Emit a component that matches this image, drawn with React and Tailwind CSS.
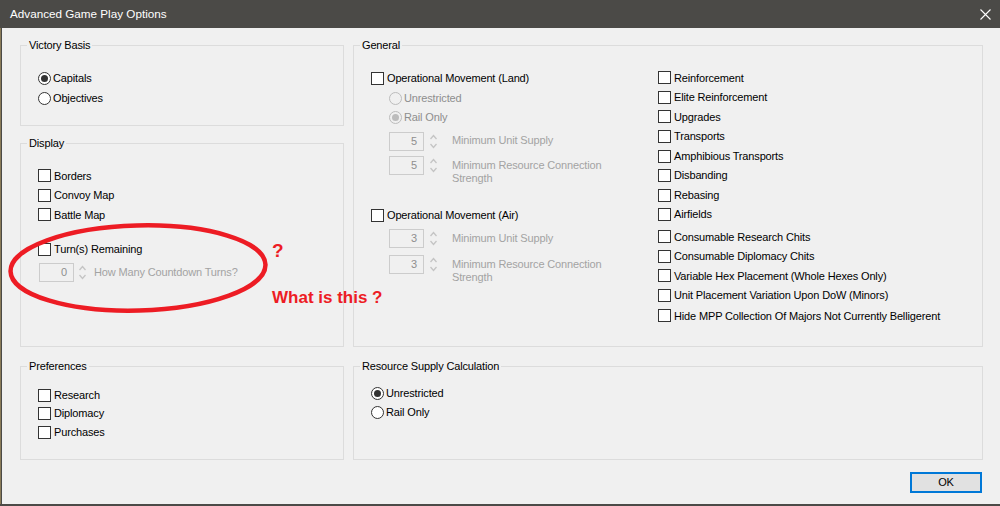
import React from "react";

const Check = ({ label, cls = "" }) => (
  <div className={`flex items-center ${cls}`}>
    <span className="w-[13px] h-[13px] border border-[#333333] bg-white shrink-0" />
    <span className="ml-[3px] whitespace-nowrap text-black">{label}</span>
  </div>
);

const Radio = ({ label, checked = false, disabled = false, cls = "" }) => (
  <div className={`flex items-center ${cls}`}>
    <span
      className={`w-[13px] h-[13px] rounded-full border shrink-0 flex items-center justify-center ${
        disabled ? "border-[#bcbcbc] bg-[#f0f0f0]" : "border-[#333333] bg-white"
      }`}
    >
      {checked && (
        <span
          className={`w-[7px] h-[7px] rounded-full ${
            disabled ? "bg-[#bcbcbc]" : "bg-[#333333]"
          }`}
        />
      )}
    </span>
    <span
      className={`ml-[2px] whitespace-nowrap ${
        disabled ? "text-[#8e8e8e]" : "text-black"
      }`}
    >
      {label}
    </span>
  </div>
);

const Arrows = () => (
  <svg width="9" height="19" viewBox="0 0 9 19" className="shrink-0">
    <path d="M1.5 7 L4.5 3.5 L7.5 7" fill="none" stroke="#c4c4c4" strokeWidth="1.3" />
    <path d="M1.5 12 L4.5 15.5 L7.5 12" fill="none" stroke="#c4c4c4" strokeWidth="1.3" />
  </svg>
);

const SpinBox = ({ value }) => (
  <div className="w-[35px] h-[19px] border border-[#cccccc] bg-[#f0f0f0] flex items-center justify-end pr-[6px] text-[#8e8e8e] shrink-0">
    {value}
  </div>
);

const Group = ({ title, cls = "", children }) => (
  <fieldset className={`border border-[#dcdcdc] ${cls}`}>
    <legend className="ml-[6px] px-[2px] leading-[13px] text-black">{title}</legend>
    {children}
  </fieldset>
);

const rightChecks = [
  { label: "Reinforcement", cls: "h-[19.57px]" },
  { label: "Elite Reinforcement", cls: "h-[19.57px]" },
  { label: "Upgrades", cls: "h-[19.57px]" },
  { label: "Transports", cls: "h-[19.57px]" },
  { label: "Amphibious Transports", cls: "h-[19.57px]" },
  { label: "Disbanding", cls: "h-[19.57px]" },
  { label: "Rebasing", cls: "h-[19.57px]" },
  { label: "Airfields", cls: "h-[19.57px]" },
  { label: "Consumable Research Chits", cls: "h-[19.5px] mt-[2.6px]" },
  { label: "Consumable Diplomacy Chits", cls: "h-[19.5px]" },
  { label: "Variable Hex Placement (Whole Hexes Only)", cls: "h-[19.5px]" },
  { label: "Unit Placement Variation Upon DoW (Minors)", cls: "h-[19.5px]" },
  { label: "Hide MPP Collection Of Majors Not Currently Belligerent", cls: "h-[19.5px] mt-[1px]" },
];

export default function App() {
  return (
    <div className="relative w-[1000px] h-[506px] overflow-hidden bg-[#f0f0f0] flex flex-col font-['Liberation_Sans',Arial,sans-serif] text-[11px] tracking-[-0.15px] text-black">
      {/* Title bar */}
      <div className="h-[28px] shrink-0 bg-[#4b4a47] flex items-center justify-between pl-[10px] pr-[9px] text-white text-[11.7px] tracking-normal">
        <span>Advanced Game Play Options</span>
        <svg width="11" height="11" viewBox="0 0 11 11">
          <path d="M0.5 0.5 L10.5 10.5 M10.5 0.5 L0.5 10.5" stroke="#ffffff" strokeWidth="1.1" />
        </svg>
      </div>

      {/* Body */}
      <div className="flex-1 flex min-h-0">
        <div className="w-[1px] bg-[#8a7b58]" />
        <div className="w-[1px] bg-[#4b4a47]" />
        <div className="flex-1 flex flex-col pl-[18px] pt-[11px]">
          <div className="grid grid-cols-[324px_630px] gap-x-[9px]">
            {/* Left column */}
            <div className="flex flex-col">
              <Group title="Victory Basis" cls="h-[87px]">
                <div className="pl-[17px] pt-[16px]">
                  <Radio label="Capitals" checked cls="h-[20px]" />
                  <Radio label="Objectives" cls="h-[20px]" />
                </div>
              </Group>
              <Group title="Display" cls="h-[210px] mt-[11px]">
                <div className="pl-[17px] pt-[16px]">
                  <Check label="Borders" cls="h-[19.5px]" />
                  <Check label="Convoy Map" cls="h-[19.5px]" />
                  <Check label="Battle Map" cls="h-[19.5px]" />
                  <Check label="Turn(s) Remaining" cls="h-[20px] mt-[14.5px]" />
                  <div className="flex items-center mt-[4px] pl-[1px]">
                    <SpinBox value="0" />
                    <span className="ml-[4px]">
                      <Arrows />
                    </span>
                    <span className="ml-[7px] text-[#a3a3a3] whitespace-nowrap">
                      How Many Countdown Turns?
                    </span>
                  </div>
                </div>
              </Group>
            </div>

            {/* General */}
            <Group title="General" cls="h-[308px]">
              <div className="flex pt-[16px]">
                <div className="w-[304px] pl-[17px] flex flex-col">
                  <Check label="Operational Movement (Land)" cls="h-[20px]" />
                  <div className="pl-[18px] flex flex-col">
                    <Radio label="Unrestricted" disabled cls="h-[20px]" />
                    <Radio label="Rail Only" checked disabled cls="h-[19px]" />
                    <div className="flex items-start mt-[4.5px]">
                      <SpinBox value="5" />
                      <span className="ml-[5px]">
                        <Arrows />
                      </span>
                      <span className="ml-[14px] pt-[2px] leading-[13px] text-[#a3a3a3] whitespace-nowrap">
                        Minimum Unit Supply
                      </span>
                    </div>
                    <div className="flex items-start mt-[5.5px]">
                      <SpinBox value="5" />
                      <span className="ml-[5px]">
                        <Arrows />
                      </span>
                      <span className="ml-[14px] pt-[3px] leading-[13px] text-[#a3a3a3] w-[165px]">
                        Minimum Resource Connection Strength
                      </span>
                    </div>
                  </div>
                  <Check label="Operational Movement (Air)" cls="h-[20px] mt-[20px]" />
                  <div className="pl-[18px] flex flex-col">
                    <div className="flex items-start mt-[4px]">
                      <SpinBox value="3" />
                      <span className="ml-[5px]">
                        <Arrows />
                      </span>
                      <span className="ml-[14px] pt-[3px] leading-[13px] text-[#a3a3a3] whitespace-nowrap">
                        Minimum Unit Supply
                      </span>
                    </div>
                    <div className="flex items-start mt-[7px]">
                      <SpinBox value="3" />
                      <span className="ml-[5px]">
                        <Arrows />
                      </span>
                      <span className="ml-[14px] pt-[3px] leading-[13px] text-[#a3a3a3] w-[165px]">
                        Minimum Resource Connection Strength
                      </span>
                    </div>
                  </div>
                </div>
                <div className="flex flex-col">
                  {rightChecks.map((c) => (
                    <Check key={c.label} label={c.label} cls={c.cls} />
                  ))}
                </div>
              </div>
            </Group>

            {/* Row 2 */}
            <Group title="Preferences" cls="h-[100px] mt-[13px]">
              <div className="pl-[17px] pt-[12.75px]">
                <Check label="Research" cls="h-[18.5px]" />
                <Check label="Diplomacy" cls="h-[18.5px]" />
                <Check label="Purchases" cls="h-[18.5px]" />
              </div>
            </Group>
            <Group title="Resource Supply Calculation" cls="h-[100px] mt-[13px]">
              <div className="pl-[17px] pt-[10.5px]">
                <Radio label="Unrestricted" checked cls="h-[19px]" />
                <Radio label="Rail Only" cls="h-[19px]" />
              </div>
            </Group>
          </div>

          <div className="w-[963px] flex justify-end mt-[12px]">
            <button className="w-[72px] h-[21px] mr-[1px] border-2 border-[#0078d7] bg-[#e1e1e1] flex items-center justify-center text-black">
              OK
            </button>
          </div>
        </div>
      </div>
      <div className="h-[2px] shrink-0 bg-[#4b4a47]" />

      {/* Red annotation overlay */}
      <svg
        className="absolute left-0 top-0 pointer-events-none"
        width="1000"
        height="506"
        viewBox="0 0 1000 506"
      >
        <ellipse
          cx="138"
          cy="268"
          rx="127.5"
          ry="42.5"
          fill="none"
          stroke="#ed1c24"
          strokeWidth="4.5"
          transform="rotate(-1.5 138 268)"
        />
      </svg>
      <span className="absolute left-[272px] top-[241px] text-[19px] leading-[20px] font-bold tracking-normal text-[#ed1c24]">
        ?
      </span>
      <span className="absolute left-[272px] top-[288px] text-[17px] leading-[20px] font-bold tracking-normal text-[#ed1c24] whitespace-nowrap">
        What is this ?
      </span>
    </div>
  );
}
